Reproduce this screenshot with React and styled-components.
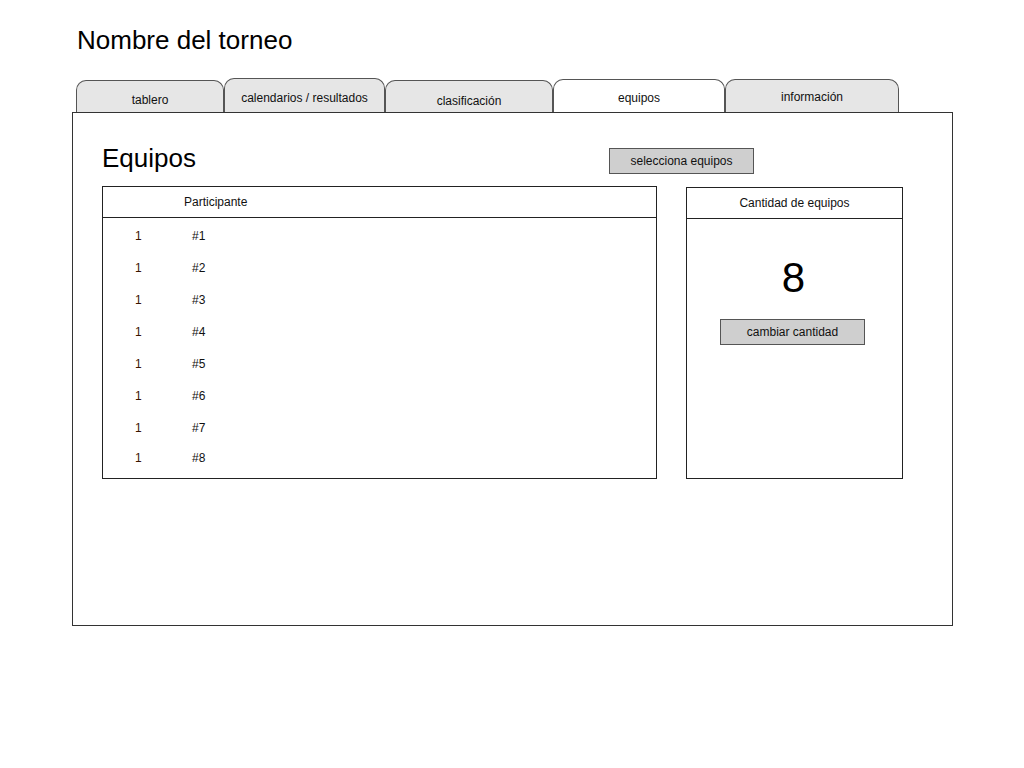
import React from 'react';
import styled, { createGlobalStyle } from 'styled-components';

const GlobalStyle = createGlobalStyle`
  body {
    margin: 0;
    background: #ffffff;
    font-family: "Comic Sans MS", "Liberation Sans", sans-serif;
    color: #111;
  }
`;

const Page = styled.div`
  width: 1024px;
  height: 768px;
  padding: 24px 0 0 72px;
  box-sizing: border-box;
`;

const Title = styled.h1`
  margin: 0 0 0 5px;
  height: 32px;
  font-size: 26px;
  font-weight: normal;
  line-height: 32px;
  color: #000;
`;

const TabRow = styled.div`
  display: flex;
  align-items: flex-end;
  margin: 22px 0 0 4px;
  height: 34px;
  position: relative;
  z-index: 1;
`;

const Tab = styled.div`
  width: ${(p) => p.$w}px;
  height: ${(p) => p.$h}px;
  box-sizing: border-box;
  border: 1px solid #555;
  border-bottom: none;
  border-radius: 10px 10px 0 0;
  background: ${(p) => (p.$active ? '#ffffff' : '#e6e6e6')};
  font-size: 12px;
  text-align: center;
  padding-top: ${(p) => p.$pt}px;
  color: #111;
`;

const Panel = styled.div`
  width: 881px;
  height: 514px;
  box-sizing: border-box;
  border: 1px solid #333;
  padding: 31px 0 0 29px;
`;

const HeadRow = styled.div`
  display: flex;
  align-items: flex-start;
  width: 652px;
  height: 42px;
`;

const Heading = styled.h2`
  flex: 1;
  margin: 0;
  font-size: 26px;
  font-weight: normal;
  line-height: 28px;
  color: #000;
`;

const Button = styled.div`
  width: ${(p) => p.$w}px;
  height: 26px;
  box-sizing: border-box;
  margin-top: ${(p) => p.$mt || 0}px;
  margin-right: ${(p) => p.$mr || 0}px;
  border: 1px solid #555;
  background: #cfcfcf;
  font-size: 12px;
  line-height: 24px;
  text-align: center;
  color: #111;
`;

const Columns = styled.div`
  display: flex;
  gap: 29px;
  align-items: flex-start;
`;

const Table = styled.div`
  width: 555px;
  height: 293px;
  box-sizing: border-box;
  border: 1px solid #222;
`;

const TableHead = styled.div`
  height: 31px;
  box-sizing: border-box;
  border-bottom: 1px solid #222;
  padding-left: 81px;
  font-size: 12px;
  line-height: 31px;
`;

const Rows = styled.div`
  padding-top: 2px;
`;

const Row = styled.div`
  display: flex;
  height: ${(p) => (p.$last ? 28 : 32)}px;
  align-items: center;
  font-size: 12px;
`;

const Num = styled.span`
  width: 57px;
  padding-left: 32px;
  color: #3a1400;
`;

const Name = styled.span`
  color: #111;
`;

const Card = styled.div`
  width: 217px;
  height: 292px;
  margin-top: 1px;
  box-sizing: border-box;
  border: 1px solid #222;
  display: flex;
  flex-direction: column;
  align-items: center;
`;

const CardHead = styled.div`
  align-self: stretch;
  height: 31px;
  box-sizing: border-box;
  border-bottom: 1px solid #222;
  font-size: 12px;
  line-height: 31px;
  text-align: center;
`;

const BigNumber = styled.div`
  margin-top: 36px;
  margin-right: 2px;
  font-size: 42px;
  line-height: 46px;
  color: #000;
`;

const tabs = [
  { label: 'tablero', w: 148, h: 32, pt: 12 },
  { label: 'calendarios / resultados', w: 161, h: 34, pt: 12 },
  { label: 'clasificación', w: 168, h: 32, pt: 13 },
  { label: 'equipos', w: 172, h: 33, pt: 11, active: true },
  { label: 'información', w: 174, h: 33, pt: 10 },
];

const teams = ['#1', '#2', '#3', '#4', '#5', '#6', '#7', '#8'];

export default function App() {
  return (
    <>
      <GlobalStyle />
      <Page>
        <Title>Nombre del torneo</Title>
        <TabRow>
          {tabs.map((t) => (
            <Tab key={t.label} $w={t.w} $h={t.h} $pt={t.pt} $active={t.active}>
              {t.label}
            </Tab>
          ))}
        </TabRow>
        <Panel>
          <HeadRow>
            <Heading>Equipos</Heading>
            <Button $w={145} $mt={4}>selecciona equipos</Button>
          </HeadRow>
          <Columns>
            <Table>
              <TableHead>Participante</TableHead>
              <Rows>
                {teams.map((t, i) => (
                  <Row key={t} $last={i === teams.length - 1}>
                    <Num>1</Num>
                    <Name>{t}</Name>
                  </Row>
                ))}
              </Rows>
            </Table>
            <Card>
              <CardHead>Cantidad de equipos</CardHead>
              <BigNumber>8</BigNumber>
              <Button $w={145} $mt={18} $mr={4}>cambiar cantidad</Button>
            </Card>
          </Columns>
        </Panel>
      </Page>
    </>
  );
}
